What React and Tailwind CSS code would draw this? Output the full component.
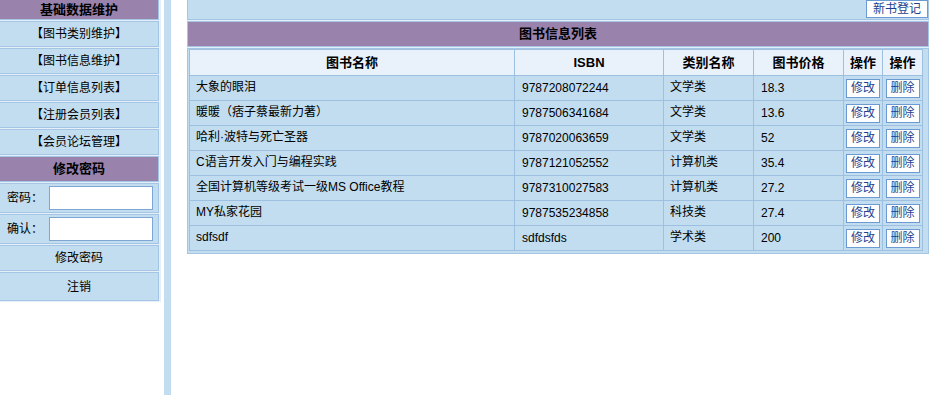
import React from "react";

const books = [
  { name: "大象的眼泪", isbn: "9787208072244", cat: "文学类", price: "18.3" },
  { name: "暖暖（痞子蔡最新力著）", isbn: "9787506341684", cat: "文学类", price: "13.6" },
  { name: "哈利·波特与死亡圣器", isbn: "9787020063659", cat: "文学类", price: "52" },
  { name: "C语言开发入门与编程实践", isbn: "9787121052552", cat: "计算机类", price: "35.4" },
  { name: "全国计算机等级考试一级MS Office教程", isbn: "9787310027583", cat: "计算机类", price: "27.2" },
  { name: "MY私家花园", isbn: "9787535234858", cat: "科技类", price: "27.4" },
  { name: "sdfsdf", isbn: "sdfdsfds", cat: "学术类", price: "200" },
];

const menu = ["【图书类别维护】", "【图书信息维护】", "【订单信息列表】", "【注册会员列表】", "【会员论坛管理】"];

const Sidebar = () => {
  return (
    <div className="w-[164px] shrink-0">
      <div className="w-[161px] flex flex-col gap-px bg-[#e4eff9] pb-px pr-[2px]">
        {/* 基础数据维护 */}
        <div className="h-[20px] bg-[#9983ad] border border-t-0 border-l-0 border-[#a4c6e4] flex items-center justify-center font-bold text-[13px] text-black">
          基础数据维护
        </div>
        {menu.map((m) => (
          <div key={m} className="h-[26px] bg-[#c2ddef] border border-l-0 border-[#a4c6e4] flex items-center justify-center text-black">
            {m}
          </div>
        ))}
        <div className="h-[26px] bg-[#9983ad] border border-l-0 border-[#a4c6e4] flex items-center justify-center font-bold text-[13px] text-black">
          修改密码
        </div>
        <div className="h-[30px] bg-[#c2ddef] border border-l-0 border-[#a4c6e4] flex items-center pl-[7px]">
          <span className="w-[42px]">密码：</span>
          <input type="password" className="w-[104px] h-[24px] bg-white border border-[#7ea6d2] outline-none" />
        </div>
        <div className="h-[30px] bg-[#c2ddef] border border-l-0 border-[#a4c6e4] flex items-center pl-[7px]">
          <span className="w-[42px]">确认：</span>
          <input type="password" className="w-[104px] h-[24px] bg-white border border-[#7ea6d2] outline-none" />
        </div>
        <div className="h-[26px] bg-[#c2ddef] border border-l-0 border-[#a4c6e4] flex items-center justify-center">
          修改密码
        </div>
        <div className="h-[29px] bg-[#c2ddef] border border-l-0 border-[#a4c6e4] flex items-center justify-center">
          注销
        </div>
      </div>
    </div>
  );
};

const SmallButton = ({ children }) => (
  <button className="w-[34px] h-[19px] bg-white border border-[#6b9bd2] text-[#1d3f91] text-[12px] leading-none flex items-center justify-center mx-auto">
    {children}
  </button>
);

const App = () => {
  return (
    <div
      className="flex w-[935px] h-[395px] bg-white overflow-hidden text-[12px] text-black"
      style={{ fontFamily: '"Liberation Sans", Arial, "Noto Sans CJK SC", sans-serif' }}
    >
      <Sidebar />

      {/* frame separator */}
      <div className="w-[7px] shrink-0 bg-[#c2ddef]" />

      {/* Right frame */}
      <div className="pl-[16px] pt-0">
        <div className="w-[742px] flex flex-col gap-px bg-[#e4eff9]">
          {/* toolbar */}
          <div className="h-[20px] bg-[#c2ddef] border border-t-0 border-[#a4c6e4] flex justify-end items-start">
            <button className="w-[62px] h-[18px] bg-white border border-[#6b9bd2] text-[#1d3f91] text-[12px] leading-none">
              新书登记
            </button>
          </div>

          {/* title */}
          <div className="h-[26px] bg-[#9983ad] border border-[#a4c6e4] flex items-center justify-center font-bold text-[13px]">
            图书信息列表
          </div>

          {/* table */}
          <div className="bg-[#c2ddef] border border-[#a4c6e4] pl-px pb-[2px]">
            <table className="border-separate border-spacing-0 border-l border-t border-[#9dbfe0] table-fixed w-[734px]">
              <colgroup>
                <col className="w-[325px]" />
                <col className="w-[149px]" />
                <col className="w-[90px]" />
                <col className="w-[90px]" />
                <col className="w-[39px]" />
                <col className="w-[40px]" />
              </colgroup>
              <thead>
                <tr className="bg-[#e9f2fb]">
                  {["图书名称", "ISBN", "类别名称", "图书价格", "操作", "操作"].map((h, i) => (
                    <th key={i} className="h-[26px] p-0 border-r border-b border-[#9dbfe0] text-center font-bold text-[13px]">
                      {h}
                    </th>
                  ))}
                </tr>
              </thead>
              <tbody>
                {books.map((b) => (
                  <tr key={b.isbn} className="bg-[#c2ddef]">
                    <td className="h-[25px] p-0 pl-[6px] pb-[2px] border-r border-b border-[#9dbfe0]">{b.name}</td>
                    <td className="p-0 pl-[7px] border-r border-b border-[#9dbfe0]">{b.isbn}</td>
                    <td className="p-0 pl-[6px] pb-[2px] border-r border-b border-[#9dbfe0]">{b.cat}</td>
                    <td className="p-0 pl-[7px] border-r border-b border-[#9dbfe0]">{b.price}</td>
                    <td className="p-0 border-r border-b border-[#9dbfe0]">
                      <SmallButton>修改</SmallButton>
                    </td>
                    <td className="p-0 border-r border-b border-[#9dbfe0]">
                      <SmallButton>删除</SmallButton>
                    </td>
                  </tr>
                ))}
              </tbody>
            </table>
          </div>
        </div>
      </div>
    </div>
  );
};

export default App;
